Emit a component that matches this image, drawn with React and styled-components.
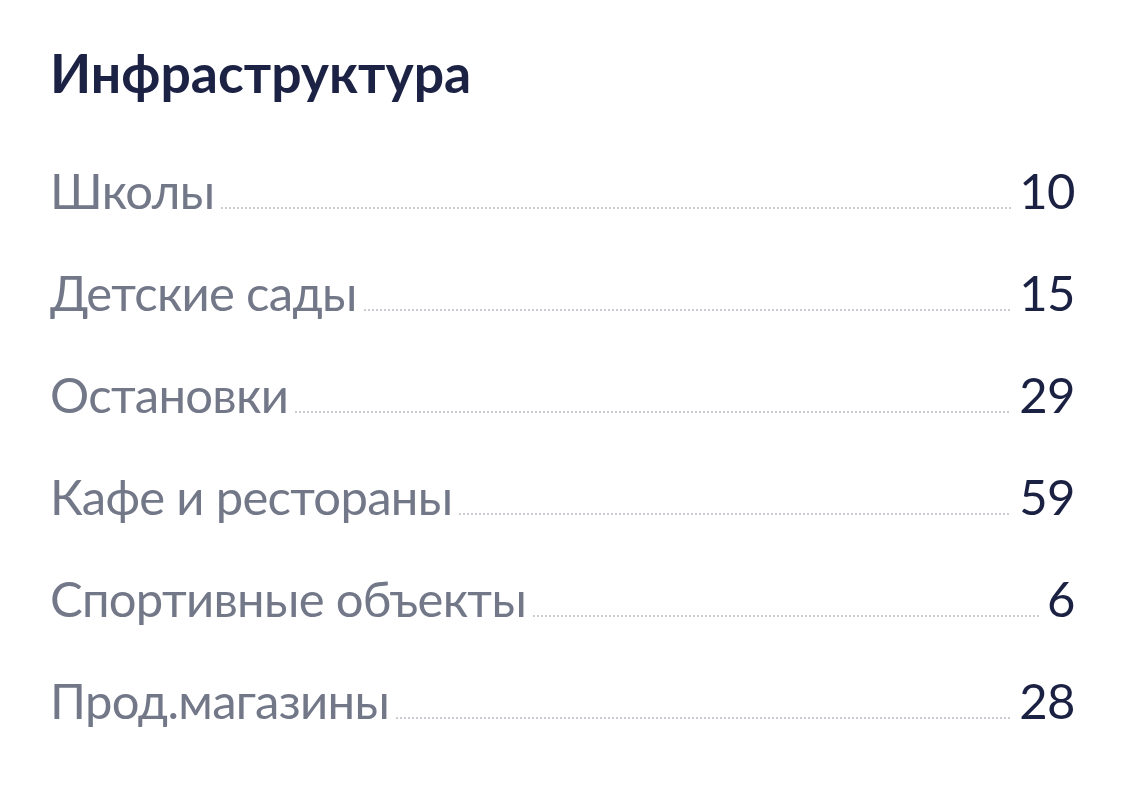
import styled, { createGlobalStyle } from "styled-components";

const GlobalStyle = createGlobalStyle`
  body {
    margin: 0;
    background: #ffffff;
    font-family: Lato, "Noto Sans", sans-serif;
  }
`;

const Wrapper = styled.section`
  padding: 40px 50px 0 50px;
`;

const Heading = styled.h2`
  margin: 0 0 55px;
  font-size: 53.5px;
  line-height: 1.2;
  font-weight: 700;
  color: #1b2244;
`;

const List = styled.ul`
  list-style: none;
  margin: 0;
  padding: 0;
  display: grid;
  grid-row-gap: 40px;
`;

const Row = styled.li`
  display: flex;
  align-items: baseline;
  font-size: 49px;
  line-height: 62px;
`;

const Label = styled.span`
  color: #737889;
  letter-spacing: -0.7px;
`;

const Dots = styled.span`
  flex: 1;
  height: 2px;
  margin: 0 8px 0 7px;
  background-image: linear-gradient(to right, #cbccd2 50%, transparent 50%);
  background-size: 4px 2px;
  background-repeat: repeat-x;
`;

const Count = styled.span`
  color: #1b2142;
  letter-spacing: -0.5px;
`;

const items = [
  { name: "Школы", count: 10 },
  { name: "Детские сады", count: 15 },
  { name: "Остановки", count: 29 },
  { name: "Кафе и рестораны", count: 59 },
  { name: "Спортивные объекты", count: 6 },
  { name: "Прод.магазины", count: 28 },
];

const App = () => (
  <>
    <GlobalStyle />
    <Wrapper>
      <Heading>Инфраструктура</Heading>
      <List>
        {items.map((item) => (
          <Row key={item.name}>
            <Label>{item.name}</Label>
            <Dots />
            <Count>{item.count}</Count>
          </Row>
        ))}
      </List>
    </Wrapper>
  </>
);

export default App;
